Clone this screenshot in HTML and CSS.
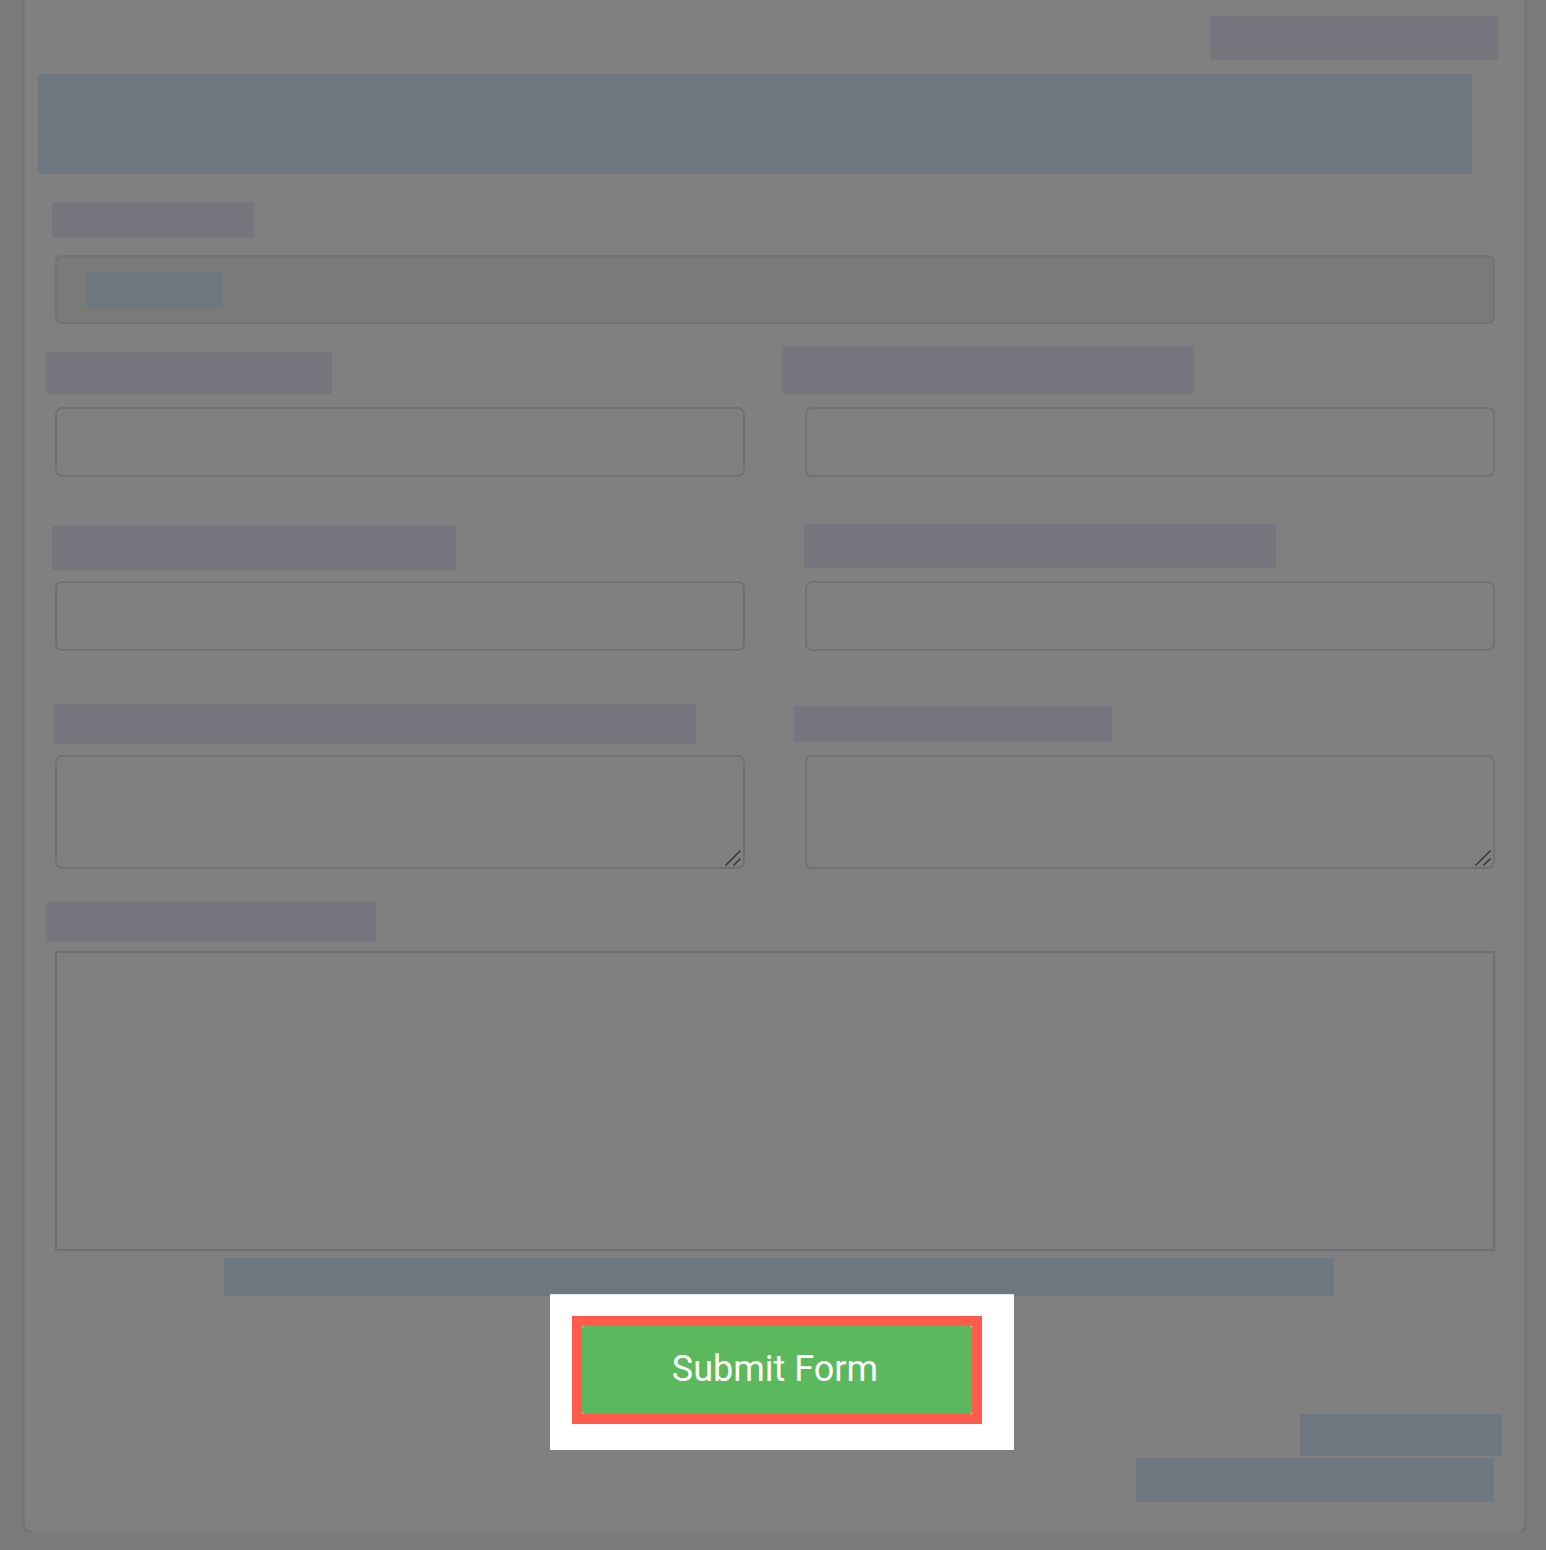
FILE: index.html
```html
<!DOCTYPE html>
<html lang="en">
<head>
<meta charset="utf-8">
<title>Form</title>
<link rel="stylesheet" href="styles.css">
</head>
<body>
<div class="card">
  <div class="top-row"><span class="redact tag-top"></span></div>
  <div class="redact-blue banner"></div>
  <div class="redact label-1"></div>
  <div class="disabled-input"><span class="redact-blue inner-val"></span></div>

  <div class="grid row-1">
    <div class="field">
      <div class="label-slot"><span class="redact l-1a"></span></div>
      <input class="inp" type="text">
    </div>
    <div class="field">
      <div class="label-slot"><span class="redact l-1b"></span></div>
      <input class="inp" type="text">
    </div>
  </div>

  <div class="grid row-2">
    <div class="field">
      <div class="label-slot slot-2a"><span class="redact l-2a"></span></div>
      <input class="inp" type="text">
    </div>
    <div class="field">
      <div class="label-slot slot-2b"><span class="redact l-2b"></span></div>
      <input class="inp" type="text">
    </div>
  </div>

  <div class="grid row-3">
    <div class="field">
      <div class="label-slot slot-3a"><span class="redact l-3a"></span></div>
      <div class="ta-wrap">
        <textarea class="ta"></textarea>
        <svg class="grip" width="18" height="16" viewBox="0 0 18 16"><path d="M0.5 15.5 L15.5 0.5 M8.5 15.5 L15.5 8.5" stroke="#2e2e2e" stroke-width="1.3" fill="none"/></svg>
      </div>
    </div>
    <div class="field">
      <div class="label-slot slot-3b"><span class="redact l-3b"></span></div>
      <div class="ta-wrap">
        <textarea class="ta"></textarea>
        <svg class="grip" width="18" height="16" viewBox="0 0 18 16"><path d="M0.5 15.5 L15.5 0.5 M8.5 15.5 L15.5 8.5" stroke="#2e2e2e" stroke-width="1.3" fill="none"/></svg>
      </div>
    </div>
  </div>

  <div class="redact label-big"></div>
  <div class="big-box"></div>
  <div class="redact-blue note-bar"></div>

  <div class="highlight">
    <div class="focus-ring"><button class="submit" type="button">Submit Form</button></div>
  </div>

  <div class="redact-blue foot-a"></div>
  <div class="redact-blue foot-b"></div>
</div>
</body>
</html>
```

FILE: styles.css
```css
html, body {
  margin: 0;
  padding: 0;
  background: #7a7a7a;
  font-family: Roboto, "Liberation Sans", sans-serif;
}

.card {
  box-sizing: border-box;
  width: 1501px;
  height: 1532px;
  margin-left: 24px;
  background: #808080;
  border-left: 1px solid #787878;
  border-right: 1px solid #787878;
  border-radius: 0 0 9px 9px;
  box-shadow: 0 2px 3px rgba(0, 0, 0, 0.12);
  display: flow-root;
}

.redact { background: #78757f; display: block; }
.redact-blue { background: #6e7680; display: block; }

.top-row {
  display: flex;
  justify-content: flex-end;
  padding-right: 26px;
  padding-top: 16px;
}
.tag-top { width: 288px; height: 44px; }

.banner {
  margin: 14px 0 0 13px;
  width: 1434px;
  height: 100px;
}

.label-1 {
  margin: 28px 0 0 27px;
  width: 202px;
  height: 36px;
}

.disabled-input {
  box-sizing: border-box;
  margin: 17px 0 0 30px;
  width: 1440px;
  height: 69px;
  border: 2px solid #717375;
  border-radius: 7px;
  background: #7a7b79;
  padding: 15px 0 0 29px;
}
.inner-val { width: 136px; height: 36px; }

.grid {
  display: grid;
  grid-template-columns: 690px 690px;
  column-gap: 60px;
  margin-left: 30px;
}

.field { display: flex; flex-direction: column; }

.label-slot {
  display: flex;
  align-items: flex-end;
  height: 70px;
  margin-bottom: 13px;
}

.l-1a { width: 286px; height: 42px; margin-left: -9px; }
.l-1b { width: 412px; height: 48px; margin-left: -23px; }

.row-2 .label-slot { height: 93px; margin-bottom: 11px; }
.l-2a { width: 404px; height: 44px; margin-left: -3px; }
.l-2b { width: 472px; height: 44px; margin-left: -1px; margin-bottom: 2px; }

.row-3 .label-slot { height: 93px; margin-bottom: 11px; }
.l-3a { width: 642px; height: 40px; margin-left: -1px; }
.l-3b { width: 318px; height: 36px; margin-left: -11px; margin-bottom: 2px; }

.inp, .ta {
  box-sizing: border-box;
  display: block;
  width: 690px;
  margin: 0;
  border: 2px solid #6e7276;
  border-radius: 7px;
  background: transparent;
  outline: none;
  font: inherit;
}
.inp { height: 70px; }
.ta { height: 114px; resize: none; }

.ta-wrap {
  position: relative;
  width: 690px;
  height: 114px;
}

.grip {
  position: absolute;
  right: 2px;
  bottom: 3px;
  display: block;
}

.label-big {
  margin: 33px 0 0 21px;
  width: 330px;
  height: 40px;
}

.big-box {
  box-sizing: border-box;
  margin: 9px 0 0 30px;
  width: 1440px;
  height: 300px;
  border: 2px solid #6b7075;
}

.note-bar {
  margin: 7px 0 0 199px;
  width: 1110px;
  height: 38px;
}

.highlight {
  box-sizing: border-box;
  margin: -2px 0 0 525px;
  width: 464px;
  height: 156px;
  background: #ffffff;
  border-top: 1px solid #dfe9f7;
  padding: 21px 0 0 22px;
}

.focus-ring {
  width: 390px;
  height: 88px;
  border: 10px solid #ff5a4c;
}

.submit {
  display: flex;
  align-items: center;
  justify-content: center;
  box-sizing: border-box;
  width: 390px;
  height: 88px;
  margin: 0;
  padding: 0 4px 2px 0;
  border: none;
  border-radius: 2px;
  background: #5cb85c;
  color: #ffffff;
  font-family: Roboto, "Liberation Sans", sans-serif;
  font-size: 36px;
  font-weight: 400;
  cursor: pointer;
}

.foot-a {
  margin: -36px 0 0 1275px;
  width: 202px;
  height: 42px;
}

.foot-b {
  margin: 2px 0 0 1111px;
  width: 358px;
  height: 44px;
}
```
